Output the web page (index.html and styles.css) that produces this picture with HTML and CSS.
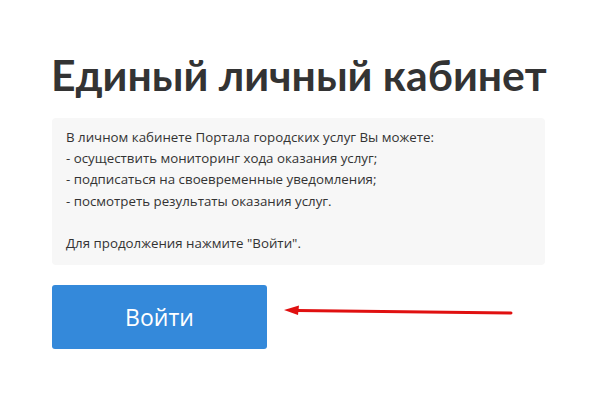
FILE: index.html
```html
<!DOCTYPE html>
<html>
<head>
    <meta charset="utf-8">
    <title>Единый личный кабинет</title>
    <link rel="stylesheet" href="styles.css">
</head>
<body>
    <div class="page">
        <h1 class="title">Единый личный кабинет</h1>

        <div class="info">
            В личном кабинете Портала городских услуг Вы можете:<br>
            - осуществить мониторинг хода оказания услуг;<br>
            - подписаться на своевременные уведомления;<br>
            - посмотреть результаты оказания услуг.<br>
            <br>
            Для продолжения нажмите "Войти".
        </div>

        <div class="actions">
            <a class="login-btn" href="#">Войти</a>
            <svg class="arrow" width="232" height="14" viewBox="0 0 232 14">
                <path d="M228 8 L14 5.5" stroke="#e01010" stroke-width="3" stroke-linecap="round" fill="none"/>
                <path d="M1 5 L16 0.5 L15 10 Z" fill="#e01010"/>
            </svg>
        </div>
    </div>
</body>
</html>
```

FILE: styles.css
```css
body { margin: 0; background: #fff; font-family: "Open Sans", Arial, sans-serif; color: #333; }
.page { width: 493px; padding: 47px 0 0 52px; }
.title {
    margin: 0 0 15px -1px;
    font-family: Lato, "Open Sans", sans-serif;
    font-size: 42.7px;
    font-weight: bold;
    line-height: 56px;
    color: #333;
    white-space: nowrap;
}
.info {
    background: #f7f7f7;
    border-radius: 4px;
    padding: 9px 14px 11px;
    font-size: 13.3px;
    line-height: 21.2px;
    color: #333;
}
.actions { display: flex; align-items: center; margin-top: 20px; }
.login-btn {
    display: flex;
    align-items: center;
    justify-content: center;
    width: 215px;
    height: 64px;
    background: #3489da;
    border-radius: 3px;
    color: #fff;
    font-size: 23px;
    text-decoration: none;
}
.arrow { margin: -10px 0 0 16px; }
```
